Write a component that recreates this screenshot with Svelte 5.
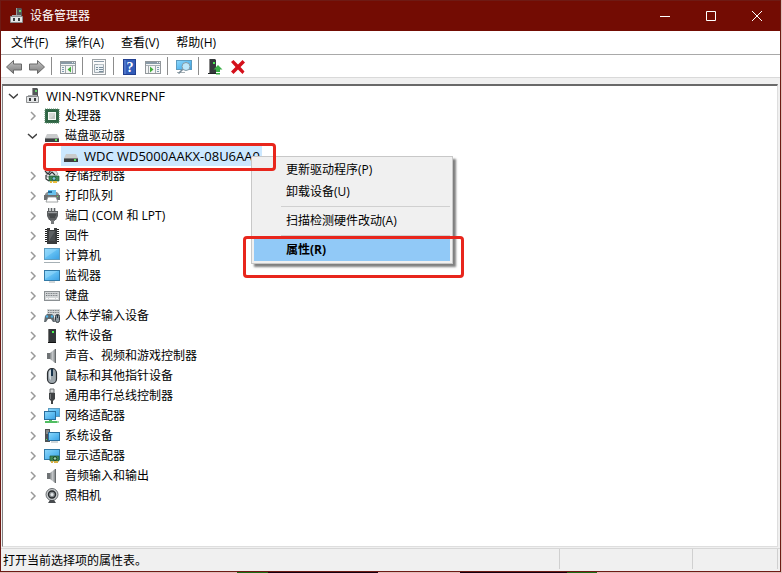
<script lang="ts">
  type Device = { label: string; icon: string; level: number; open?: boolean; leaf?: boolean; latin?: boolean };

  const menus = ['文件(F)', '操作(A)', '查看(V)', '帮助(H)'];

  const tools = [
    [
      { icon: 'back', label: '后退' },
      { icon: 'forward', label: '前进' },
    ],
    [{ icon: 'tree-pane', label: '显示/隐藏控制台树' }],
    [{ icon: 'properties', label: '属性' }],
    [
      { icon: 'help', label: '帮助' },
      { icon: 'action-pane', label: '显示/隐藏操作窗格' },
    ],
    [{ icon: 'scan', label: '扫描检测硬件改动' }],
    [
      { icon: 'update', label: '更新驱动程序' },
      { icon: 'remove', label: '卸载设备' },
    ],
  ];

  const devices: Device[] = [
    { label: 'WIN-N9TKVNREPNF', icon: 'host', level: 0, open: true, latin: true },
    { label: '处理器', icon: 'cpu', level: 1 },
    { label: '磁盘驱动器', icon: 'disk', level: 1, open: true },
    { label: 'WDC WD5000AAKX-08U6AA0', icon: 'disk', level: 2, leaf: true, latin: true },
    { label: '存储控制器', icon: 'storage', level: 1 },
    { label: '打印队列', icon: 'printer', level: 1 },
    { label: '端口 (COM 和 LPT)', icon: 'port', level: 1 },
    { label: '固件', icon: 'firmware', level: 1 },
    { label: '计算机', icon: 'computer', level: 1 },
    { label: '监视器', icon: 'monitor', level: 1 },
    { label: '键盘', icon: 'keyboard', level: 1 },
    { label: '人体学输入设备', icon: 'hid', level: 1 },
    { label: '软件设备', icon: 'software', level: 1 },
    { label: '声音、视频和游戏控制器', icon: 'speaker', level: 1 },
    { label: '鼠标和其他指针设备', icon: 'mouse', level: 1 },
    { label: '通用串行总线控制器', icon: 'usb', level: 1 },
    { label: '网络适配器', icon: 'network', level: 1 },
    { label: '系统设备', icon: 'system', level: 1 },
    { label: '显示适配器', icon: 'display', level: 1 },
    { label: '音频输入和输出', icon: 'speaker', level: 1 },
    { label: '照相机', icon: 'camera', level: 1 },
  ];

  const contextItems = ['更新驱动程序(P)', '卸载设备(U)', '-', '扫描检测硬件改动(A)', '-', '属性(R)'];

  let selected = $state('WDC WD5000AAKX-08U6AA0');
</script>

<svg class="defs" aria-hidden="true">
  <defs>
    <linearGradient id="screen" x1="0" y1="0" x2="1" y2="1">
      <stop offset="0" stop-color="#8fd8fb" />
      <stop offset="0.5" stop-color="#5fbdf2" />
      <stop offset="1" stop-color="#3aa0e4" />
    </linearGradient>
    <linearGradient id="cone" x1="0" y1="0" x2="1" y2="0">
      <stop offset="0" stop-color="#85898b" />
      <stop offset="0.5" stop-color="#c2c5c7" />
      <stop offset="1" stop-color="#8a8e90" />
    </linearGradient>
    <linearGradient id="arrow" x1="0" y1="0" x2="0" y2="1">
      <stop offset="0" stop-color="#c4c4c4" />
      <stop offset="1" stop-color="#7c7c7c" />
    </linearGradient>
  </defs>
</svg>

{#snippet icon(name: string)}
  <svg class="icon" viewBox="0 0 16 16" width="16" height="16" aria-hidden="true">
    {#if name === 'host'}
      <path d="M7 0h5l1 1v8H7z" fill="#55585a" />
      <path d="M7 0h1v9H7z" fill="#999" />
      <path d="M10 2h2v2h-2z" fill="#69d56d" />
      <path d="M1.500 8.500h12v6h-12z" fill="#e4e6e7" stroke="#8b8d8f" />
      <path d="M4 10h2v3H4zM9 10h2v3H9z" fill="#3b3e40" />
      <path d="M3 7h9v1H3z" fill="#aaacae" />
    {:else if name === 'cpu'}
      <rect x="1" y="1" width="14" height="14" fill="#2f6544" />
      <rect x="1" y="1" width="14" height="14" fill="none" stroke="#5d8d6c" stroke-dasharray="1 1" />
      <rect x="4" y="4" width="8" height="8" fill="#d5dad5" />
      <rect x="4.500" y="4.500" width="7" height="7" fill="none" stroke="#f6faf6" />
      <path d="M6 11l5-5v5z" fill="#c3cac4" />
    {:else if name === 'disk'}
      <path d="M3 6h10l2 4H1z" fill="#c9cbcc" />
      <path d="M1 10h14v4H1z" fill="#3d4042" />
      <path d="M1 10h14v1H1z" fill="#777a7c" />
      <path d="M11 11h2v2h-2z" fill="#5fe361" />
    {:else if name === 'storage'}
      <path d="M2 5l4-3 6 1 2 3-4 3H3z" fill="#e2e4e5" stroke="#888" stroke-width=".7" />
      <path d="M1 3l3 3 3-4M5 7l3-3 3 3M2 7v4l3 2" fill="none" stroke="#303436" stroke-width="1.200" />
      <path d="M5 8h10v5H5z" fill="#3e8753" stroke="#1f5832" stroke-width=".7" />
      <circle cx="10" cy="10.500" r="1.800" fill="#82c7df" stroke="#184a2b" stroke-width=".7" />
      <path d="M6 13h2v2H6zM9 13h4v2H9z" fill="#e9bd3c" />
    {:else if name === 'printer'}
      <path d="M1 6l2-2h10l2 2v6H1z" fill="#8d9193" />
      <path d="M0 7h16v5H0z" fill="#6c7072" />
      <path d="M4 2h8v5H4z" fill="#69c2ed" />
      <path d="M4 3h4v2H4z" fill="#256b99" />
      <path d="M4 9h8l2 5H2z" fill="#fff" stroke="#8b8f91" stroke-width=".8" />
      <path d="M13 8h1v1h-1z" fill="#64dd55" />
    {:else if name === 'port'}
      <path d="M4 0h8v4H4z" fill="#c9cccd" />
      <path d="M4.500 0v4M7.500 0v4M10.500 0v4" stroke="#5d6062" />
      <path d="M3 3h11v5l-2 4H5L3 8z" fill="#5c5f61" />
      <path d="M4 4h9v1H4z" fill="#9b9ea0" />
      <path d="M5 7h7M6 9h5" stroke="#333638" />
      <path d="M6 12h5v1h-1v3H7v-3H6z" fill="#777a7c" />
    {:else if name === 'firmware'}
      <path d="M3 0h10v16H3z" fill="#3a3c3d" />
      <path d="M6 0h4v2H6z" fill="#fff" />
      <path d="M2 1v14M14 1v14" stroke="#222" stroke-width="2" stroke-dasharray="1 1" />
      <path d="M5 3h6v10H5z" fill="#5d6062" />
      <path d="M5 13l6-10v10z" fill="#484b4d" />
    {:else if name === 'computer'}
      <rect x="0.500" y="0.500" width="15" height="11" fill="url(#screen)" stroke="#5d9cc0" />
      <path d="M1 1h13L1 10z" fill="#a4e0ff" opacity=".4" />
      <path d="M0 14.500h16" stroke="#a6b0b5" />
    {:else if name === 'monitor'}
      <rect x="0.500" y="2.500" width="15" height="10" fill="url(#screen)" stroke="#327aa7" />
      <path d="M1 3h13L1 11z" fill="#a4e0ff" opacity=".4" />
      <path d="M5 14h6" stroke="#a6b0b5" />
    {:else if name === 'keyboard'}
      <rect x="0.500" y="3.500" width="15" height="9" fill="#d3d6d8" stroke="#8b9093" />
      <path d="M2 5.500h12M2 7.500h12" stroke="#787d80" stroke-dasharray="1 .7" />
      <path d="M2 10.500h2M5 10.500h6M12 10.500h2" stroke="#fafafa" />
    {:else if name === 'hid'}
      <path d="M3 1h13v7H3z" fill="#d4d7d8" />
      <path d="M4 2.500h11M4 4.500h11" stroke="#73787b" stroke-dasharray="1 .7" />
      <path d="M1 8l2-2h5l2 2 1 6H9l-2-3H4l-2 3H0z" fill="#626b70" />
      <circle cx="3" cy="8.500" r="1.200" fill="#4eb3e8" />
      <circle cx="8" cy="8.500" r="1.200" fill="#4eb3e8" />
      <rect x="11.500" y="6.500" width="4" height="8" rx="2" fill="#87949c" stroke="#353b3f" />
      <path d="M13.500 7v3" stroke="#263745" />
    {:else if name === 'software'}
      <path d="M4 1h8v14H4z" fill="#333739" />
      <path d="M4 1h1v14H4z" fill="#777" />
      <path d="M8 3h2v2H8z" fill="#4af250" />
      <path d="M4 14h8v1H4z" fill="#111" />
    {:else if name === 'speaker'}
      <path d="M3 5h3v6H3z" fill="#6f7375" />
      <path d="M6 5l5-4v14l-5-4z" fill="url(#cone)" />
      <path d="M11 1h1v14h-1z" fill="#676b6d" />
    {:else if name === 'mouse'}
      <rect x="3.500" y="0.500" width="9" height="15" rx="4.500" fill="#9da6ac" stroke="#2c3034" stroke-width="1.200" />
      <path d="M5 4q0-2 2-2v10q-2-1-2-4z" fill="#d3dade" />
      <path d="M8 1v7" stroke="#17334c" stroke-width="2" />
    {:else if name === 'usb'}
      <path d="M6 1h4v4H6z" fill="#d3d5d6" stroke="#6d7072" />
      <path d="M5 5h6v6l-2 2v3H7v-3l-2-2z" fill="#404345" />
      <path d="M6 6h1v5H6z" fill="#777a7c" />
    {:else if name === 'network'}
      <rect x="4.500" y="0.500" width="11" height="8" fill="url(#screen)" stroke="#5d9cc0" />
      <rect x="0.500" y="3.500" width="11" height="8" fill="url(#screen)" stroke="#286e9e" />
      <path d="M5 12h3v1h5v2H1v-2h4z" fill="#50bd61" />
      <path d="M13 13h2v2h-2z" fill="#9bd8a3" />
    {:else if name === 'system'}
      <path d="M1 1h5v13H1z" fill="#4e5254" />
      <path d="M2 3h3M2 5h3" stroke="#bdc1c3" />
      <rect x="4.500" y="4.500" width="11" height="8" fill="url(#screen)" stroke="#286e9e" />
      <path d="M2 11h1v1H2z" fill="#59e05e" />
      <path d="M7 14h7" stroke="#a6b0b5" />
    {:else if name === 'display'}
      <rect x="0.500" y="1.500" width="15" height="10" fill="url(#screen)" stroke="#327aa7" />
      <path d="M6 8h9v5H6z" fill="#3e8753" stroke="#1f5832" stroke-width=".7" />
      <circle cx="11" cy="10.500" r="1.800" fill="#9cd4b0" stroke="#163d25" />
      <path d="M7 13h2v2H7zM10 13h4v2h-4z" fill="#d7b044" />
    {:else if name === 'camera'}
      <circle cx="8" cy="6.500" r="6" fill="#c6c9cb" stroke="#686d70" />
      <circle cx="8" cy="6.500" r="3.500" fill="#8b9093" stroke="#282c2f" stroke-width="1.400" />
      <circle cx="8" cy="6.500" r="1.500" fill="#e3e7ea" />
      <path d="M6 12h4l2 3H4z" fill="#474b4e" />
    {:else if name === 'back' || name === 'forward'}
      <path
        d={name === 'back' ? 'M0.500 8L7.500 1.500V5H15.500V11H7.500V14.500z' : 'M15.500 8L8.500 1.500V5H0.500V11H8.500V14.500z'}
        fill="url(#arrow)"
        stroke="#696969"
      />
    {:else if name === 'tree-pane' || name === 'action-pane'}
      <rect x="0.500" y="2.500" width="15" height="12" fill="#f4f5f5" stroke="#92979b" />
      <path d="M1 3h14v2H1z" fill="#8899a6" />
      <path d="M12 3.500h3" stroke="#e8edf0" stroke-dasharray="1 1" />
      <path d="M1 6.500h14" stroke="#a7afb5" />
      {#if name === 'tree-pane'}
        <path d="M5.500 7v7M12.500 7v7" stroke="#a1a8ac" />
        <path d="M2 8.500h2M2 10.500h2M2 12.500h2" stroke="#819db2" />
        <path d="M11 7.500v6L7.500 10.500z" fill="#42ae3b" />
      {:else}
        <path d="M3.500 7v7M10.500 7v7" stroke="#a1a8ac" />
        <path d="M12 8.500h2M12 10.500h2M12 12.500h2" stroke="#819db2" />
        <path d="M5 7.500v6L8.500 10.500z" fill="#42ae3b" />
      {/if}
    {:else if name === 'properties'}
      <rect x="1.500" y="0.500" width="13" height="15" fill="#fafafa" stroke="#9ca1a4" />
      <path d="M3 2.500h10" stroke="#8d9daa" />
      <path d="M3.500 5.500h9v8h-9z" fill="#edf2f5" stroke="#a3acb2" />
      <path d="M7 5.500h5" stroke="#bdc5ca" />
      <path d="M5 8.500h2M8 8.500h4M5 10.500h2M8 10.500h4M8 12.500h4" stroke="#788d9c" />
    {:else if name === 'help'}
      <rect x="1.500" y="0.500" width="12" height="15" fill="#315bb8" stroke="#213f90" />
      <path d="M3 1v14" stroke="#6b8edb" />
      <text class="help-mark" x="8" y="13" text-anchor="middle">?</text>
    {:else if name === 'scan'}
      <rect x="0.500" y="1.500" width="15" height="9" fill="url(#screen)" stroke="#5d9cc0" />
      <path d="M1 13.500h8" stroke="#a6b0b5" />
      <path d="M7.500 9.500L2.500 14.500" stroke="#788b98" stroke-width="1.600" />
      <circle cx="10" cy="7.500" r="4" fill="#bbe6fa" stroke="#8399a5" />
    {:else if name === 'update'}
      <path d="M2 0h6l1 1v14H2z" fill="#34383a" />
      <path d="M2 0h1v15H2z" fill="#888" />
      <path d="M6 3h2v2H6z" fill="#4ce954" />
      <path d="M1 14h8v1H1z" fill="#202325" />
      <path d="M11 6l4.500 4.500H13V13H9v-2.500H6.500zM9 14h4v1.500H9z" fill="#39ae45" />
    {:else if name === 'remove'}
      <path d="M1 3l2.500-2L8 5.500 12.500 1 15 3.500 10.500 8l4 4.500-2 2.500L8 10.500 3.500 15 1 12.500 5.500 8z" fill="#d4101b" />
    {/if}
  </svg>
{/snippet}

<main class="window">
  <header class="titlebar">
    {@render icon('host')}
    <h1>设备管理器</h1>
    <button aria-label="最小化">
      <svg viewBox="0 0 10 10" width="10" height="10"><path d="M0 5.500h10" /></svg>
    </button>
    <button aria-label="最大化">
      <svg viewBox="0 0 10 10" width="10" height="10"><path d="M.5.5h9v9h-9z" /></svg>
    </button>
    <button aria-label="关闭">
      <svg viewBox="0 0 10 10" width="10" height="10"><path d="M0 0l10 10M10 0L0 10" /></svg>
    </button>
  </header>

  <nav class="menubar">
    {#each menus as menu}
      <button>{menu}</button>
    {/each}
  </nav>

  <div class="toolbar" role="toolbar" aria-label="工具栏">
    {#each tools as group}
      <div class="group">
        {#each group as tool}
          <button aria-label={tool.label}>{@render icon(tool.icon)}</button>
        {/each}
      </div>
    {/each}
  </div>

  <section class="pane">
    <ul class="tree">
      {#each devices as device}
        <li class="level-{device.level}">
          {#if device.leaf}
            <span class="toggle"></span>
          {:else}
            <button class="toggle" class:open={device.open} aria-label="展开 {device.label}">
              <svg viewBox="0 0 10 10" width="10" height="10">
                <path d={device.open ? 'M1 3l4.500 4L10 3' : 'M4 1l4 4-4 4'} />
              </svg>
            </button>
          {/if}
          <button
            class="device"
            class:latin={device.latin}
            class:selected={selected === device.label}
            onclick={() => (selected = device.label)}
          >
            {@render icon(device.icon)}
            <span>{device.label}</span>
          </button>
        </li>
      {/each}
    </ul>
  </section>

  <footer class="statusbar">
    <span class="message">打开当前选择项的属性表。</span>
    <span class="cell wide"></span>
    <span class="cell"></span>
  </footer>

  <div class="context-menu" role="menu">
    {#each contextItems as item}
      {#if item === '-'}
        <hr />
      {:else}
        <button role="menuitem" class:active={item === '属性(R)'}>{item}</button>
      {/if}
    {/each}
  </div>

  <div class="mark mark-device"></div>
  <div class="mark mark-menu"></div>
</main>
<div class="desktop"></div>

<style>
  :global(body) {
    margin: 0;
    background: #e0bdb9;
  }

  .defs {
    position: absolute;
    width: 0;
    height: 0;
  }

  .window {
    position: relative;
    display: flex;
    flex-direction: column;
    box-sizing: border-box;
    min-height: calc(100vh - 1px);
    margin-right: 1px;
    border: 1px solid #6e1a14;
    background: #f0f0f0;
    color: #000;
    font: 12px/20px 'Open Sans', 'Noto Sans CJK SC', sans-serif;
  }

  button {
    margin: 0;
    padding: 0;
    border: 0;
    background: none;
    color: inherit;
    font: inherit;
    white-space: nowrap;
  }

  .icon {
    display: block;
    flex: none;
  }

  .help-mark {
    fill: #fff;
    font: bold 14px 'Liberation Serif', serif;
  }

  .titlebar {
    display: flex;
    align-items: center;
    height: 30px;
    padding-left: 8px;
    background: #730c03;
    color: #fff;
  }

  .titlebar h1 {
    flex: 1;
    margin: 0 0 0 5px;
    font-size: 12px;
    font-weight: 400;
  }

  .titlebar button {
    display: grid;
    place-items: center;
    width: 46px;
    height: 30px;
  }

  .titlebar button path {
    fill: none;
    stroke: #fff;
  }

  .menubar {
    display: flex;
    height: 23px;
    padding-left: 2px;
    border-bottom: 1px solid #a9a9a9;
    background: #fff;
  }

  .menubar button {
    padding: 1px 9px 0 8px;
  }

  .toolbar {
    display: flex;
    height: 22px;
    padding-left: 1px;
    border-bottom: 1px solid #d9d9d9;
    background: #fff;
  }

  .group {
    display: flex;
    align-items: center;
  }

  .group + .group::before {
    content: '';
    width: 1px;
    height: 18px;
    margin: 0 4px 0 3px;
    background: #8c8c8c;
  }

  .toolbar button {
    display: grid;
    place-items: center;
    width: 23px;
    height: 22px;
    padding-top: 2px;
  }

  .pane {
    flex: 1;
    margin: 6px 2px 1px 1px;
    border: 1px solid #dedede;
    border-top: 2px solid #696969;
    border-left-color: #828282;
    background: #fff;
  }

  .tree {
    margin: 0;
    padding: 0 0 0 2px;
    list-style: none;
  }

  .tree li {
    display: flex;
    height: 20px;
  }

  .level-1 {
    padding-left: 19px;
  }

  .level-2 {
    padding-left: 38px;
  }

  .toggle {
    display: grid;
    place-items: center;
    width: 16px;
    margin-right: 2px;
  }

  .toggle path {
    fill: none;
    stroke: #9a9a9a;
    stroke-width: 1.5;
  }

  .toggle.open path {
    stroke: #404040;
  }

  .device {
    display: flex;
    align-items: center;
    gap: 5px;
    padding: 0 2px;
  }

  .device.latin {
    font-size: 13px;
  }

  .device.selected {
    background: #cce8ff;
  }

  .statusbar {
    display: flex;
    height: 22px;
    padding-right: 2px;
    border-top: 1px solid #d7d7d7;
  }

  .message {
    flex: 1;
    padding-left: 2px;
    line-height: 24px;
  }

  .cell {
    width: 84px;
    margin-bottom: 2px;
    border-left: 1px solid #d0d0d0;
  }

  .cell:last-child {
    border-right: 1px solid #d0d0d0;
  }

  .cell.wide {
    width: 132px;
  }

  .context-menu {
    position: absolute;
    left: 250px;
    top: 155px;
    box-sizing: border-box;
    width: 202px;
    padding: 2px;
    border: 1px solid #c8c8c8;
    background: #f0f0f0;
    box-shadow: 3px 3px 2px rgba(0, 0, 0, 0.5);
  }

  .context-menu button {
    display: block;
    width: 100%;
    height: 22px;
    padding-left: 32px;
    text-align: left;
  }

  .context-menu button.active {
    background: #91c9f7;
    font-weight: 700;
  }

  .context-menu hr {
    height: 1px;
    margin: 3px 0 3px 27px;
    border: 0;
    background: #d0d0d0;
  }

  .mark {
    position: absolute;
    box-sizing: border-box;
    border: 3px solid #e8261c;
    border-radius: 4px;
    pointer-events: none;
  }

  .mark-device {
    left: 42px;
    top: 142px;
    width: 233px;
    height: 28px;
  }

  .mark-menu {
    left: 242px;
    top: 235px;
    width: 221px;
    height: 42px;
  }

  .desktop {
    height: 1px;
    background: linear-gradient(
      90deg,
      #e0bdb9 237px,
      #1c6b16 237px 268px,
      #16000f 268px 378px,
      #e0bdb9 378px 460px,
      #16000f 460px 567px,
      #1c6b16 567px 597px,
      #e0bdb9 597px
    );
  }
</style>
